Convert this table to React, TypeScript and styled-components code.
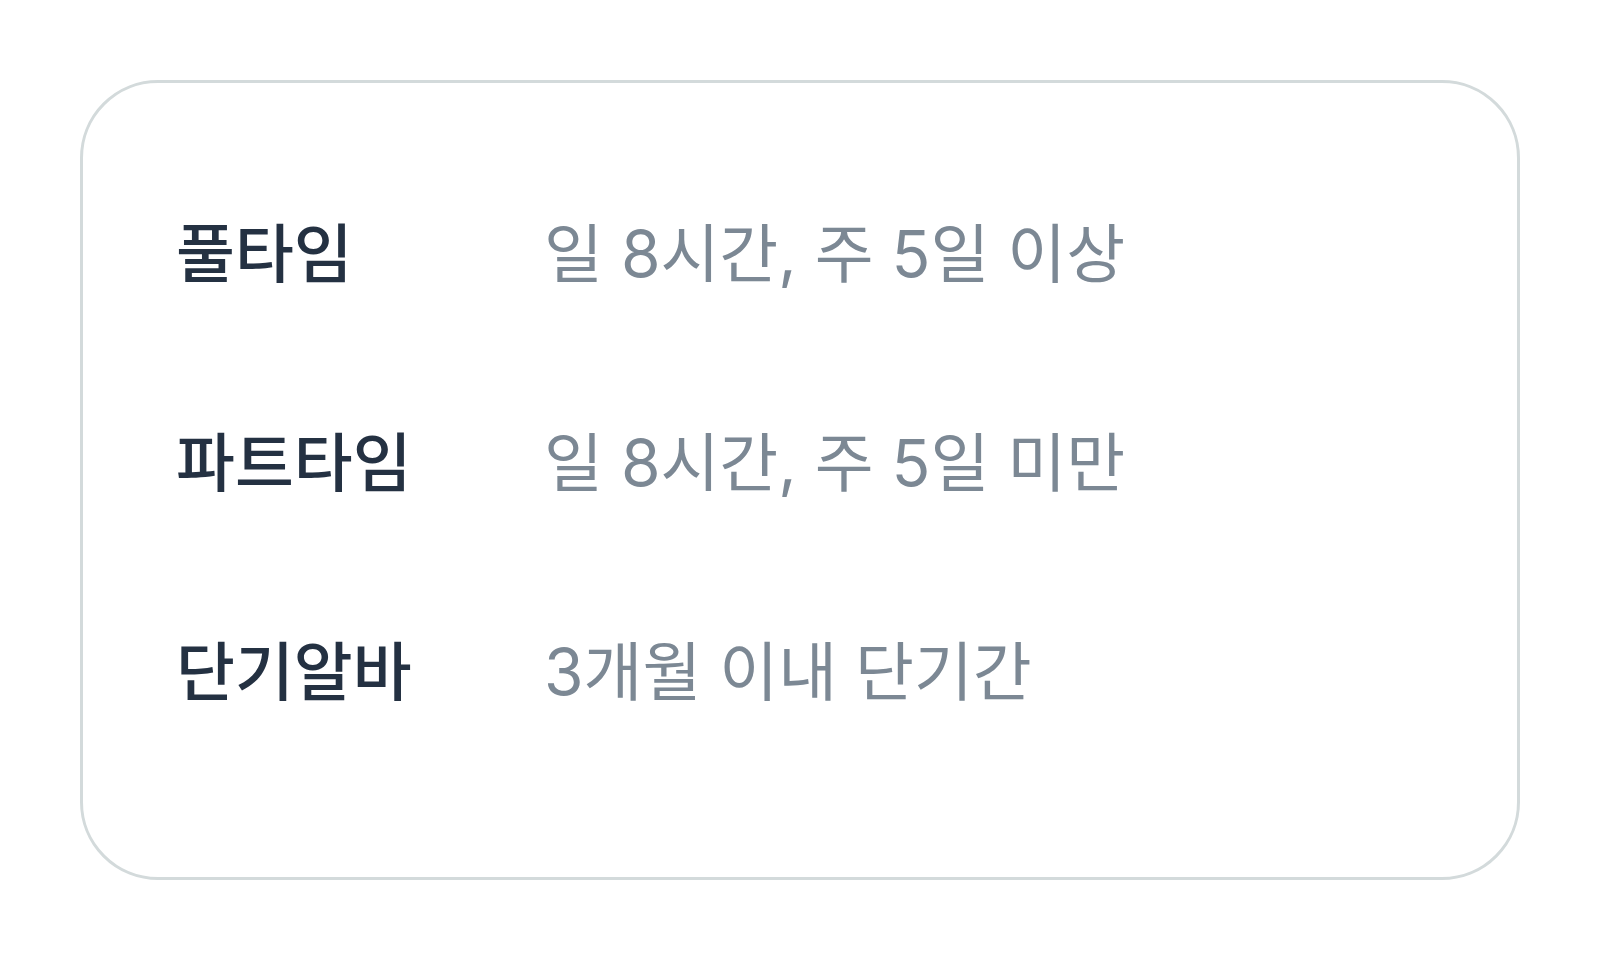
import React from 'react'
import styled, { createGlobalStyle } from 'styled-components'

const GlobalStyle = createGlobalStyle`
  html, body {
    margin: 0;
    padding: 0;
    background: #ffffff;
  }

  body {
    font-family: 'Inter', 'Noto Sans CJK KR', sans-serif;
  }
`

const Page = styled.div`
  box-sizing: border-box;
  width: 1600px;
  height: 960px;
  padding: 80px;
`

const Card = styled.div`
  box-sizing: border-box;
  height: 800px;
  padding: 123px 93px 0;

  border: 3px solid #d3dadb;
  border-radius: 78px;
  background: #fff;

  display: flex;
  flex-direction: column;
  gap: 113px;
`

const Row = styled.div`
  display: grid;
  grid-template-columns: 368px 1fr;
  align-items: center;

  font-size: 64px;
  line-height: 96px;
`

const Label = styled.span`
  font-weight: 500;
  color: #243142;
`

const Value = styled.span`
  font-weight: 400;
  color: #7c8894;
`

const types = [
  { label: '풀타임', desc: '일 8시간, 주 5일 이상' },
  { label: '파트타임', desc: '일 8시간, 주 5일 미만' },
  { label: '단기알바', desc: '3개월 이내 단기간' },
]

const App = () => {
  return (
    <>
      <GlobalStyle />
      <Page>
        <Card>
          {types.map((t) => (
            <Row key={t.label}>
              <Label>{t.label}</Label>
              <Value>{t.desc}</Value>
            </Row>
          ))}
        </Card>
      </Page>
    </>
  )
}

export default App
